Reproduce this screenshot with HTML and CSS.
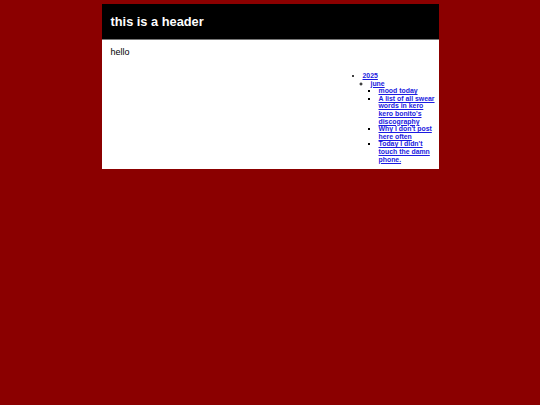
FILE: index.html
```html
<!DOCTYPE html>
<html>
<head>
<meta charset="utf-8">
<link rel="stylesheet" href="styles.css">
</head>
<body>
<div class="page">
  <header class="site-header"><h1 class="title">this is a header</h1></header>
  <div class="content">
    <p class="intro">hello</p>
    <aside class="archive">
      <ul class="years">
        <li><a href="#">2025</a>
          <ul class="months">
            <li><a href="#">june</a>
              <ul class="posts">
                <li><a href="#">mood today</a></li>
                <li><a href="#">A list of all swear words in kero kero bonito's discography</a></li>
                <li><a href="#">Why I don't post here often</a></li>
                <li><a href="#">Today I didn't touch the damn phone.</a></li>
              </ul>
            </li>
          </ul>
        </li>
      </ul>
    </aside>
  </div>
</div>
</body>
</html>
```
FILE: styles.css
```css
html, body {
  margin: 0;
  padding: 0;
}
body {
  background: #8b0000;
  font-family: "Liberation Sans", Arial, sans-serif;
}
.page {
  width: 337px;
  margin: 4px auto 0;
  background: #fff;
}
.site-header {
  background: #000;
  height: 35px;
  border-bottom: 1px solid #777;
  display: flex;
  align-items: center;
  padding-left: 9px;
}
.title {
  margin: 0;
  color: #fff;
  font-size: 12.8px;
  font-weight: bold;
}
.content {
  display: flex;
  flex-direction: column;
  padding: 6px 2px 6px 9px;
}
.intro {
  margin: 0;
  font-size: 9px;
  line-height: 12px;
}
.archive {
  align-self: flex-end;
  width: 82px;
  margin-top: 14px;
  font-size: 6.9px;
  font-weight: bold;
  line-height: 7.6px;
}
.archive a {
  color: #1a1ae0;
}
.archive ul {
  margin: 0;
  padding-left: 8px;
}
.years { list-style: disc; }
.months { list-style: circle; }
.posts { list-style: square; }
```
